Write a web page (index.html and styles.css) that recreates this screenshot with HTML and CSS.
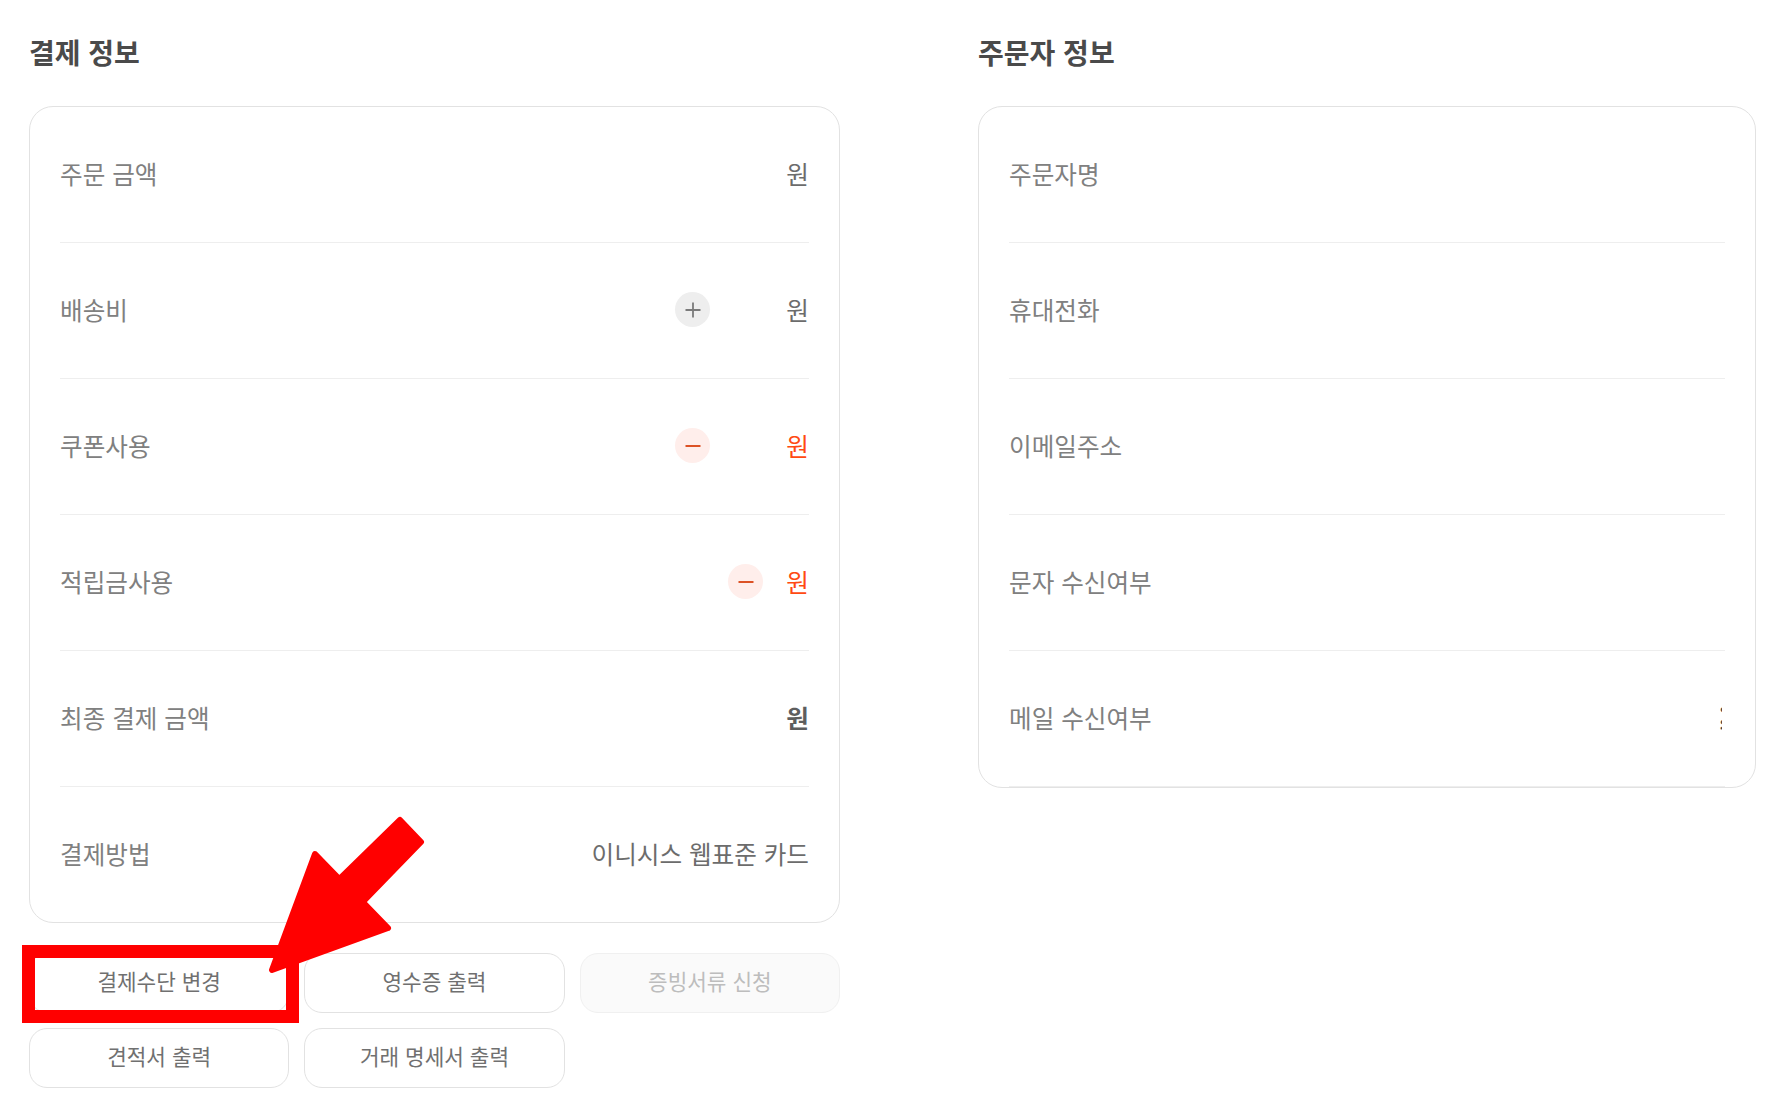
FILE: index.html
```html
<!DOCTYPE html>
<html lang="ko">
<head>
  <meta charset="UTF-8">
  <title>결제 정보</title>
  <link rel="stylesheet" href="styles.css">
</head>
<body>
  <div class="page">

    <!-- 결제 정보 -->
    <section class="col col-pay">
      <h2 class="title">결제 정보</h2>
      <div class="card">
        <div class="row">
          <span class="label">주문 금액</span>
          <span class="value">원</span>
        </div>
        <div class="row">
          <span class="label">배송비</span>
          <span class="sign sign-plus sign-far">
            <svg viewBox="0 0 16 16" width="16" height="16"><path d="M.5 8H15.500M8 .5V15.500" /></svg>
          </span>
          <span class="value">원</span>
        </div>
        <div class="row">
          <span class="label">쿠폰사용</span>
          <span class="sign sign-minus sign-far">
            <svg viewBox="0 0 16 16" width="16" height="16"><path d="M.5 8H15.500" /></svg>
          </span>
          <span class="value value-red">원</span>
        </div>
        <div class="row">
          <span class="label">적립금사용</span>
          <span class="sign sign-minus">
            <svg viewBox="0 0 16 16" width="16" height="16"><path d="M.5 8H15.500" /></svg>
          </span>
          <span class="value value-red">원</span>
        </div>
        <div class="row">
          <span class="label">최종 결제 금액</span>
          <span class="value value-bold">원</span>
        </div>
        <div class="row row-last">
          <span class="label">결제방법</span>
          <span class="value">이니시스 웹표준 카드</span>
        </div>
      </div>
      <div class="actions">
        <button class="btn">결제수단 변경</button>
        <button class="btn">영수증 출력</button>
        <button class="btn btn-off">증빙서류 신청</button>
        <button class="btn">견적서 출력</button>
        <button class="btn">거래 명세서 출력</button>
      </div>
    </section>

    <!-- 주문자 정보 -->
    <section class="col col-buyer">
      <h2 class="title">주문자 정보</h2>
      <div class="card">
        <div class="row"><span class="label">주문자명</span></div>
        <div class="row"><span class="label">휴대전화</span></div>
        <div class="row"><span class="label">이메일주소</span></div>
        <div class="row"><span class="label">문자 수신여부</span></div>
        <div class="row">
          <span class="label">메일 수신여부</span>
          <span class="value value-clip">;</span>
        </div>
      </div>
    </section>

    <!-- 빨간 표시 -->
    <svg class="mark" viewBox="0 0 1773 1119" width="1773" height="1119">
      <rect x="28.5" y="951.5" width="264" height="65" fill="none" stroke="#ff0000" stroke-width="13" />
      <path d="M272 970 L315 854 L339.3 879.2 L400 820 L421 842 L362.8 902 L388 928 Z"
            fill="#ff0000" stroke="#ff0000" stroke-width="6" stroke-linejoin="round" />
    </svg>
  </div>
</body>
</html>
```

FILE: styles.css
```css
* {
  box-sizing: border-box;
}
html, body {
  margin: 0;
  padding: 0;
  background: #fff;
}
body {
  font-family: "Noto Sans CJK KR", "Noto Sans", sans-serif;
  overflow: hidden;
}
.page {
  position: relative;
  width: 1773px;
  height: 1119px;
  display: flex;
  gap: 138px;
  padding: 32px 0 0 29px;
}
.col-pay {
  width: 811px;
}
.col-buyer {
  width: 778px;
}
.title {
  margin: 0 0 32px;
  height: 42px;
  font-size: 28px;
  line-height: 40px;
  font-weight: 700;
  color: #4a4a4a;
}
.card {
  border: 1px solid #e2e2e2;
  border-radius: 24px;
  padding: 0 30px;
  background: #fff;
}
.row {
  display: flex;
  align-items: center;
  height: 136px;
  padding-bottom: 4px;
  border-bottom: 1px solid #eeeeee;
  font-size: 24.6px;
}
.row-last {
  height: 135px;
  border-bottom: none;
}
.label {
  color: #808080;
  flex: 1;
}
.value {
  color: #6c6c6c;
}
.value-red {
  color: #ff4a12;
}
.value-bold {
  font-weight: 700;
  color: #5e5e5e;
}
.value-clip {
  width: 3px;
  overflow: hidden;
  margin-right: 3px;
  margin-bottom: 3px;
  font-weight: 700;
  color: #444;
}
.sign {
  width: 35px;
  height: 35px;
  margin-top: 2px;
  border-radius: 50%;
  display: flex;
  align-items: center;
  justify-content: center;
  margin-right: 23px;
}
.sign-far {
  margin-right: 76px;
}
.sign path {
  fill: none;
  stroke-width: 1.8;
}
.sign-plus {
  background: #eeeeee;
}
.sign-plus path {
  stroke: #7a7a7a;
}
.sign-minus {
  background: #ffeeeb;
}
.sign-minus path {
  stroke: #d9400f;
}
.actions {
  display: grid;
  grid-template-columns: repeat(3, 1fr);
  gap: 15px;
  margin-top: 30px;
}
.btn {
  height: 60px;
  border: 1px solid #e2e2e2;
  border-radius: 18px;
  background: #fff;
  font-family: inherit;
  font-size: 21.3px;
  color: #707070;
  padding: 0 0 6px;
}
.btn-off {
  background: #fafafa;
  border-color: #f0f0f0;
  color: #bdbdbd;
}
.mark {
  position: absolute;
  left: 0;
  top: 0;
  pointer-events: none;
}
```
